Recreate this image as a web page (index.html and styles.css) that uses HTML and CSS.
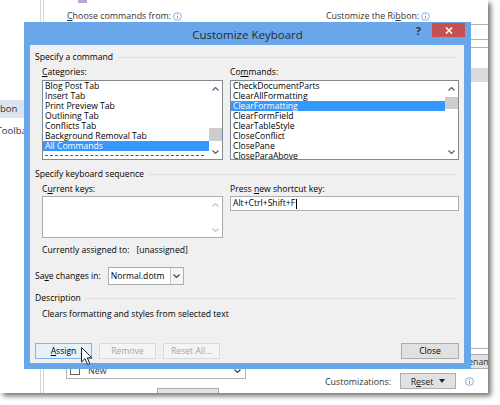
FILE: index.html
```html
<!DOCTYPE html>
<html>
<head>
<meta charset="utf-8">
<link rel="stylesheet" href="styles.css">
</head>
<body>
<div class="stage">
  <div class="options">
    <div class="nav">
      <div class="nav-list">
        <div class="nav-item sel">Customize Ribbon</div>
        <div class="nav-item">Quick Access Toolbar</div>
      </div>
    </div>
    <div class="main">
      <div class="col">
        <div class="bg-icon"></div>
        <div class="bg-label"><span><u>C</u>hoose commands from:</span><svg class="info" width="9" height="9" viewBox="0 0 9 9"><circle cx="4.5" cy="4.5" r="3.9" fill="none" stroke="#7aa6dd" stroke-width="0.9"/><rect x="4" y="3.9" width="1" height="2.9" fill="#7aa6dd"/><rect x="4" y="2.1" width="1" height="1" fill="#7aa6dd"/></svg></div>
        <div class="bg-drop"></div>
        <div class="bg-list">
          <div class="bg-item"><span class="chk"></span><span>New</span></div>
          <svg class="bg-arrow" width="7" height="4" viewBox="0 0 7 4"><polyline points="0.5,0.5 3.5,3.5 6.5,0.5" fill="none" stroke="#444" stroke-width="1.2"/></svg>
        </div>
        <div class="bg-btn"></div>
      </div>
      <div class="col">
        <div class="bg-spacer"></div>
        <div class="bg-label"><span>Customize the Ri<u>b</u>bon:</span><svg class="info" width="9" height="9" viewBox="0 0 9 9"><circle cx="4.5" cy="4.5" r="3.9" fill="none" stroke="#7aa6dd" stroke-width="0.9"/><rect x="4" y="3.9" width="1" height="2.9" fill="#7aa6dd"/><rect x="4" y="2.1" width="1" height="1" fill="#7aa6dd"/></svg></div>
        <div class="bg-drop"></div>
        <div class="bg-tree"><div class="tree-sel"></div></div>
        <div class="bg-btns">
          <span class="bg-btn2"></span>
          <span class="bg-btn2"></span>
          <span class="bg-btn2">Rename...</span>
        </div>
        <div class="bg-custom">
          <span>Customizations:</span>
          <span class="bg-reset"><span>R<u>e</u>set</span><span class="tri"></span></span>
          <svg class="info" width="9" height="9" viewBox="0 0 9 9"><circle cx="4.5" cy="4.5" r="3.9" fill="none" stroke="#7aa6dd" stroke-width="0.9"/><rect x="4" y="3.9" width="1" height="2.9" fill="#7aa6dd"/><rect x="4" y="2.1" width="1" height="1" fill="#7aa6dd"/></svg>
        </div>
      </div>
    </div>
  </div>

  <div class="dialog">
    <div class="titlebar">
      <div class="title">Customize Keyboard</div>
      <div class="controls">
        <span class="help">?</span>
        <span class="close"><svg width="8" height="7" viewBox="0 0 8 7"><path d="M1 0.5 L7 6.5 M7 0.5 L1 6.5" stroke="#fff" stroke-width="1.6"/></svg></span>
      </div>
    </div>
    <div class="content">
      <div class="group">Specify a command</div>
      <div class="cols first">
        <div class="field">
          <div class="lbl"><u>C</u>ategories:</div>
          <div class="listbox">
            <div class="items">
              <div class="item">Blog Post Tab</div>
              <div class="item">Insert Tab</div>
              <div class="item">Print Preview Tab</div>
              <div class="item">Outlining Tab</div>
              <div class="item">Conflicts Tab</div>
              <div class="item">Background Removal Tab</div>
              <div class="item sel">All Commands</div>
              <div class="item dash"></div>
            </div>
            <div class="sb">
              <div class="sb-btn"><svg width="7" height="4" viewBox="0 0 7 4"><polyline points="0.5,3.5 3.5,0.5 6.5,3.5" fill="none" stroke="#606060" stroke-width="1.2"/></svg></div>
              <div class="sb-track"><div class="thumb thumb-cat"></div></div>
              <div class="sb-btn"><svg width="7" height="4" viewBox="0 0 7 4"><polyline points="0.5,0.5 3.5,3.5 6.5,0.5" fill="none" stroke="#606060" stroke-width="1.2"/></svg></div>
            </div>
          </div>
        </div>
        <div class="field">
          <div class="lbl">Co<u>m</u>mands:</div>
          <div class="listbox">
            <div class="items">
              <div class="item">CheckDocumentParts</div>
              <div class="item">ClearAllFormatting</div>
              <div class="item sel">ClearFormatting</div>
              <div class="item">ClearFormField</div>
              <div class="item">ClearTableStyle</div>
              <div class="item">CloseConflict</div>
              <div class="item">ClosePane</div>
              <div class="item">CloseParaAbove</div>
            </div>
            <div class="sb">
              <div class="sb-btn"><svg width="7" height="4" viewBox="0 0 7 4"><polyline points="0.5,3.5 3.5,0.5 6.5,3.5" fill="none" stroke="#606060" stroke-width="1.2"/></svg></div>
              <div class="sb-track"><div class="thumb thumb-cmd"></div></div>
              <div class="sb-btn"><svg width="7" height="4" viewBox="0 0 7 4"><polyline points="0.5,0.5 3.5,3.5 6.5,0.5" fill="none" stroke="#606060" stroke-width="1.2"/></svg></div>
            </div>
          </div>
        </div>
      </div>

      <div class="group second">Specify keyboard sequence</div>
      <div class="cols keyseq">
        <div class="field">
          <div class="lbl">C<u>u</u>rrent keys:</div>
          <div class="listbox keys">
            <div class="items"></div>
            <div class="sb">
              <div class="sb-btn"><svg width="7" height="4" viewBox="0 0 7 4"><polyline points="0.5,3.5 3.5,0.5 6.5,3.5" fill="none" stroke="#c6c6c6" stroke-width="1.2"/></svg></div>
              <div class="sb-track"></div>
              <div class="sb-btn"><svg width="7" height="4" viewBox="0 0 7 4"><polyline points="0.5,0.5 3.5,3.5 6.5,0.5" fill="none" stroke="#c6c6c6" stroke-width="1.2"/></svg></div>
            </div>
          </div>
        </div>
        <div class="field">
          <div class="lbl">Press <u>n</u>ew shortcut key:</div>
          <div class="input"><span>Alt+Ctrl+Shift+F</span><span class="caret"></span></div>
        </div>
      </div>

      <div class="assigned"><span>Currently assigned to:</span><span>[unassigned]</span></div>

      <div class="save">
        <span>Sa<u>v</u>e changes in:</span>
        <div class="select">
          <span class="select-val">Normal.dotm</span>
          <span class="select-btn"><svg width="7" height="4" viewBox="0 0 7 4"><polyline points="0.5,0.5 3.5,3.5 6.5,0.5" fill="none" stroke="#444" stroke-width="1.2"/></svg></span>
        </div>
      </div>

      <div class="group third">Description</div>
      <div class="desc">Clears formatting and styles from selected text</div>

      <div class="buttons">
        <span class="btn primary"><u>A</u>ssign</span>
        <span class="btn disabled">Remove</span>
        <span class="btn disabled">Reset All...</span>
        <span class="btn close-btn">Close</span>
      </div>
    </div>
  </div>

  <svg class="cursor" width="13" height="19" viewBox="0 0 13 19"><path d="M0.5 0.5 L0.5 15 L4 11.6 L6.6 17.6 L8.8 16.6 L6.3 10.8 L11 10.8 Z" fill="#fff" stroke="#222" stroke-width="1" stroke-linejoin="round"/></svg>
</div>
</body>
</html>
```

FILE: styles.css
```css
* { box-sizing: border-box; }
body { margin: 0; background: #fff; font-family: "Open Sans", "Noto Sans", sans-serif; }
u { text-decoration: underline; text-underline-offset: 1px; }

.stage { position: relative; width: 500px; height: 405px; overflow: hidden; }

/* background Word Options window */
.options {
  width: 488px; height: 393px; display: flex; background: #fff;
  box-shadow: 3px 3px 5px rgba(0,0,0,0.55); overflow: hidden;
  font-size: 8.9px; color: #333;
}
.nav { width: 41px; flex: none; border-right: 1px solid #d6d6d6; overflow: hidden; padding-top: 100px; }
.nav-list { margin-left: -65px; }
.nav-item { height: 18px; line-height: 18px; white-space: nowrap; margin-bottom: 4px; padding-left: 2px; font-size: 9.5px; }
.nav-item.sel { background: #dce4ee; }

.main {
  flex: 1; margin-left: 2px; border-left: 1px solid #d6d6d6;
  display: grid; grid-template-columns: 180px 220px; column-gap: 79px;
  padding-left: 22px; min-width: 0;
}
.col { display: flex; flex-direction: column; min-width: 0; }
.bg-icon { height: 3px; width: 9px; margin-left: 12px; background: #b9a4dc; }
.bg-spacer { height: 3px; }
.bg-label { margin-top: 6px; height: 14px; line-height: 14px; padding-left: 1px; white-space: nowrap; display: flex; align-items: center; gap: 2px; }
.bg-drop { margin-top: 1px; height: 16px; border: 1px solid #b4b4b4; }
.bg-list {
  margin-top: 7px; height: 332px; border: 1px solid #b4b4b4;
  display: flex; align-items: flex-end; justify-content: space-between; padding: 0 4px 1px 3px;
}
.bg-item { display: flex; align-items: center; gap: 8px; height: 14px; }
.chk { width: 10px; height: 10px; border: 1px solid #666; background: #fff; }
.bg-arrow { margin-bottom: 4px; }
.bg-btn {
  margin-top: 9px; margin-left: 91px; width: 62px; height: 20px; flex: none;
  border: 1px solid #adadad; background: #e1e1e1;
}
.bg-tree { margin-top: 7px; height: 302px; border: 1px solid #b4b4b4; padding-top: 20px; }
.tree-sel { height: 14px; background: #dadbdc; }
.bg-btns { margin-top: 5px; display: flex; gap: 4px; }
.bg-btn2 {
  width: 60px; height: 15px; flex: none; border: 1px solid #adadad; background: #e1e1e1;
  text-align: center; line-height: 13px; white-space: nowrap;
}
.bg-custom { margin-top: 4px; display: flex; align-items: center; gap: 9px; height: 16px; white-space: nowrap; }
.bg-reset {
  width: 56px; height: 16px; border: 1px solid #adadad; background: #e1e1e1;
  display: flex; align-items: center; justify-content: center; gap: 6px; color: #222;
}
.tri { width: 0; height: 0; border-left: 3px solid transparent; border-right: 3px solid transparent; border-top: 4px solid #222; }
.info { flex: none; }

/* Customize Keyboard dialog */
.dialog {
  position: absolute; left: 24px; top: 22px; width: 447px; height: 347px;
  background: #69a6ea; display: flex; flex-direction: column;
  font-size: 8.6px; color: #000;
}
.titlebar { height: 23px; flex: none; display: grid; grid-template-columns: 1fr auto 1fr; align-items: start; }
.title { grid-column: 2; font-size: 11.5px; line-height: 25px; color: #2b2b2b; white-space: nowrap; }
.controls { grid-column: 3; justify-self: end; display: flex; align-items: flex-start; padding-right: 6px; }
.help { font-size: 11px; font-weight: bold; line-height: 14px; margin-top: 2px; margin-right: 11px; color: #333; }
.close { width: 33px; height: 14px; margin-top: 1px; background: #c75050; display: flex; align-items: center; justify-content: center; }

.content {
  flex: 1; margin: 0 7px 6px 6px; background: #f0f0f0;
  padding: 6px 5px 4px 5px; display: flex; flex-direction: column;
}
.group { display: flex; align-items: center; gap: 5px; height: 12px; line-height: 12px; white-space: nowrap; padding-right: 3px; }
.group::after { content: ""; flex: 1; height: 1px; background: #dcdcdc; }
.group.second { margin-top: 8px; }
.group.third { margin-top: 7px; }

.cols { display: grid; grid-template-columns: 181px 229px; column-gap: 7px; padding-left: 7px; margin-top: 3px; }
.field { display: flex; flex-direction: column; }
.lbl { height: 12px; line-height: 12px; white-space: nowrap; }
.listbox { margin-top: 2px; height: 80px; border: 1px solid #828790; background: #fff; display: flex; }
.listbox.keys { margin-top: 1px; height: 42px; border-color: #abadb3; }
.items { flex: 1; overflow: hidden; min-width: 0; }
.item { height: 10px; line-height: 10px; padding-left: 2px; white-space: nowrap; overflow: hidden; }
.item.sel { background: #3399ff; color: #fff; }
.item.dash { margin: 4px 5px 0 2px; height: 1px; border-top: 1px dashed #555; }
.sb { width: 13px; flex: none; display: flex; flex-direction: column; }
.sb-btn { height: 15px; display: flex; align-items: center; justify-content: center; }
.sb-track { flex: 1; }
.thumb { width: 13px; background: #cdcdcd; }
.thumb-cat { margin-top: 32px; height: 13px; }
.thumb-cmd { margin-top: 1px; height: 12px; }

.input {
  margin-top: 1px; height: 15px; border: 1px solid #abadb3; background: #fff;
  padding-left: 2px; line-height: 13px; display: flex; align-items: center; white-space: nowrap;
}
.caret { width: 1px; height: 10px; background: #000; margin-left: 1px; }

.assigned { margin-top: 6px; padding-left: 7px; height: 12px; line-height: 12px; display: flex; gap: 7px; white-space: nowrap; }
.save { margin-top: 11px; display: flex; align-items: center; gap: 7px; height: 18px; white-space: nowrap; }
.select { width: 76px; height: 18px; border: 1px solid #abadb3; background: #fff; display: flex; }
.select-val { flex: 1; padding-left: 2px; line-height: 16px; }
.select-btn { width: 13px; border-left: 1px solid #c4c4c4; background: #f5f5f5; display: flex; align-items: center; justify-content: center; }
.desc { margin-top: 4px; padding-left: 7px; height: 12px; line-height: 12px; white-space: nowrap; }

.buttons { margin-top: auto; display: flex; gap: 7px; }
.btn {
  width: 57px; height: 16px; border: 1px solid #adadad; background: #e1e1e1;
  text-align: center; line-height: 14px; white-space: nowrap;
}
.btn.primary { background: #e5f1fb; border-color: #7eb4ea; }
.btn.disabled { background: #f4f4f4; border-color: #dadada; color: #a6a6a6; }
.btn.close-btn { margin-left: auto; width: 58px; }

.cursor { position: absolute; left: 81px; top: 347px; }
```
